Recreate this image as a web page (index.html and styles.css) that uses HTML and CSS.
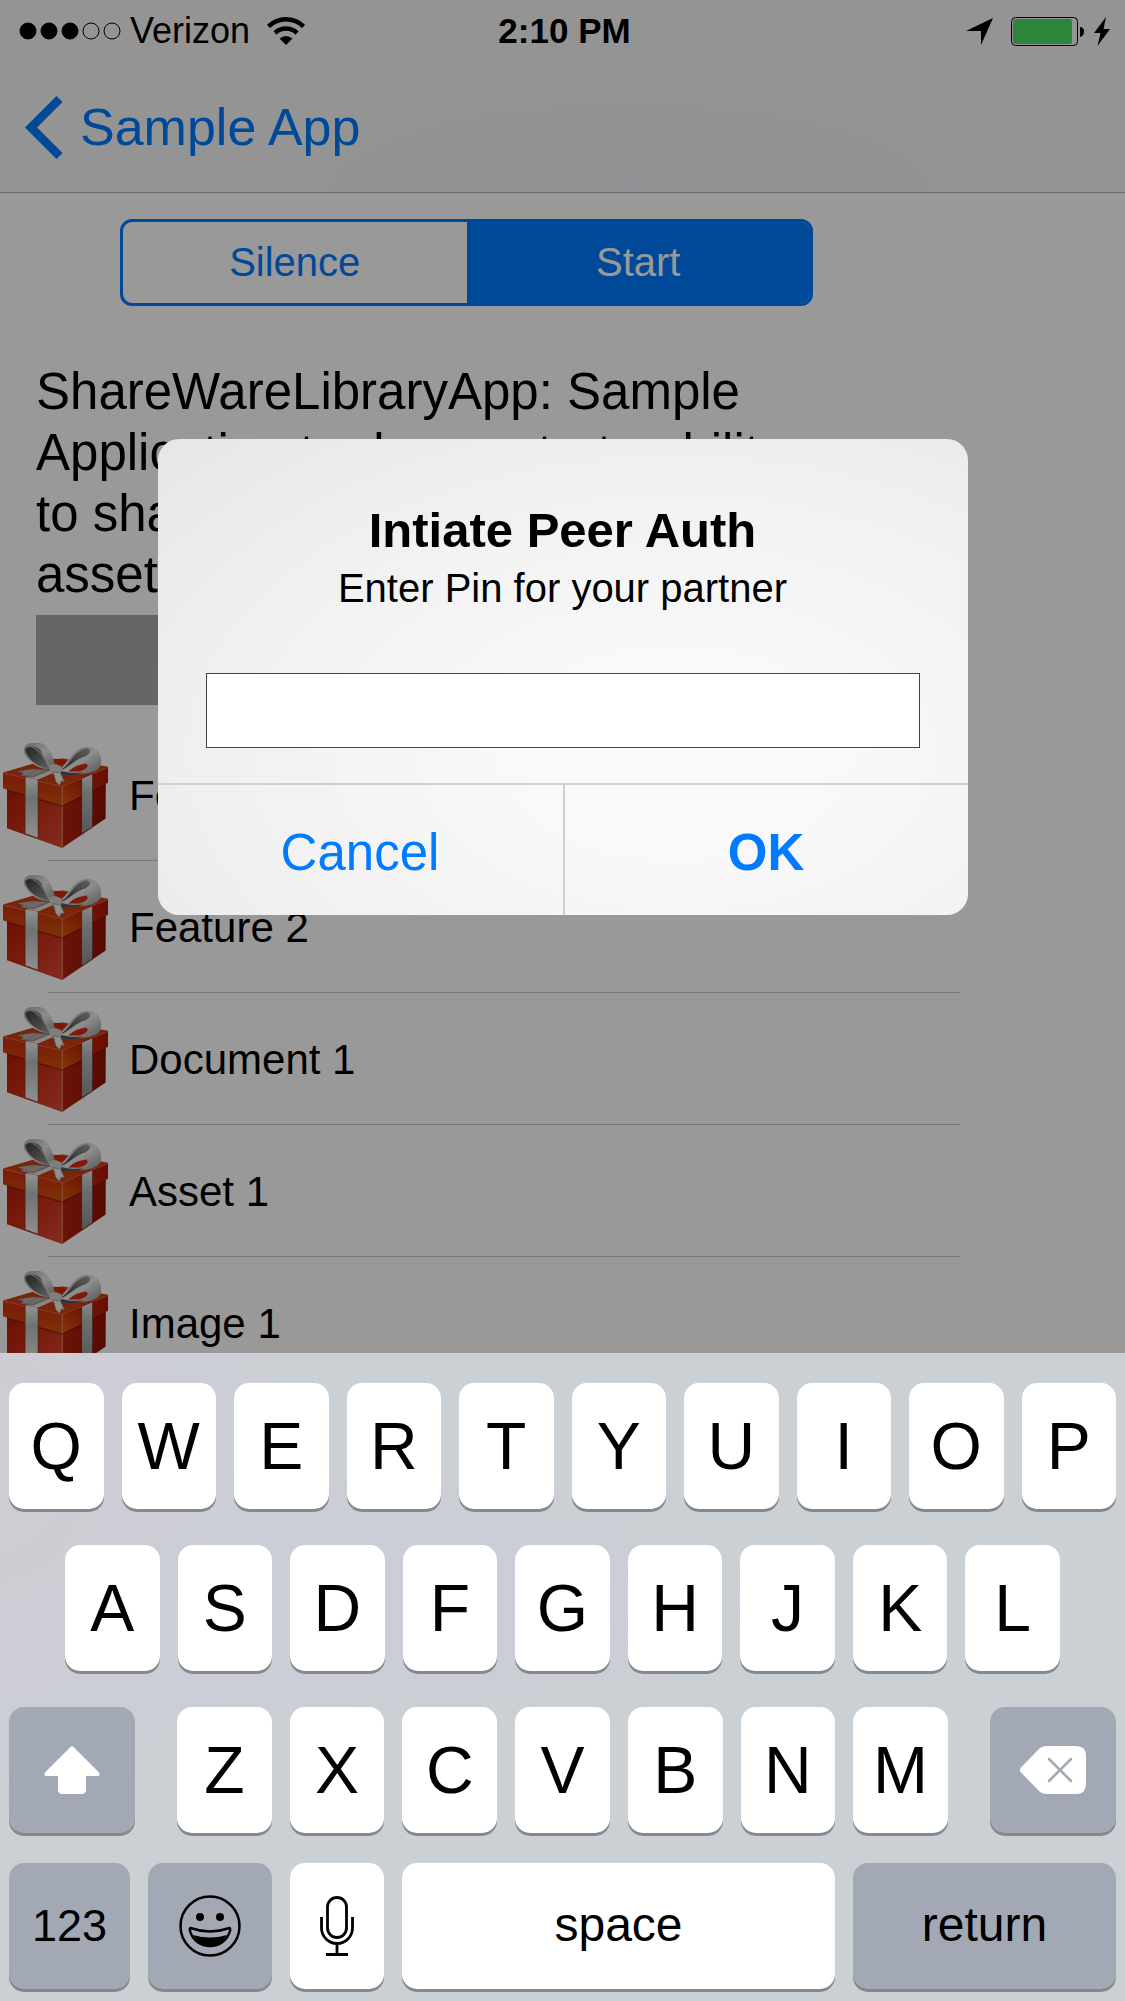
FILE: index.html
```html
<!DOCTYPE html>
<html lang="en">
<head>
<meta charset="utf-8">
<meta name="viewport" content="width=device-width, initial-scale=1">
<title>Sample App</title>
<link rel="stylesheet" href="styles.css">
</head>
<body>
<svg class="defs" aria-hidden="true">
  <defs>
    <linearGradient id="side-left" x1="0" y1="0" x2="1" y2="1"><stop offset="0" stop-color="#b41804"/><stop offset=".5" stop-color="#cc3018"/><stop offset="1" stop-color="#dc4a34"/></linearGradient>
    <linearGradient id="side-right" x1="0" y1="0" x2="1" y2="0"><stop offset="0" stop-color="#b42410"/><stop offset="1" stop-color="#901000"/></linearGradient>
    <linearGradient id="lid-left" x1="0" y1="0" x2="0" y2="1"><stop offset="0" stop-color="#cc2c0c"/><stop offset="1" stop-color="#d0540c"/></linearGradient>
    <linearGradient id="lid-right" x1="0" y1="1" x2="1" y2="0"><stop offset="0" stop-color="#d85c0c"/><stop offset=".5" stop-color="#bc2408"/><stop offset="1" stop-color="#a81408"/></linearGradient>
    <linearGradient id="ribbon" x1="0" y1="0" x2="0" y2="1"><stop offset="0" stop-color="#f4f4f4"/><stop offset=".35" stop-color="#bcbec0"/><stop offset="1" stop-color="#f0f0f0"/></linearGradient>
    <linearGradient id="ribbon-dark" x1="0" y1="0" x2="0" y2="1"><stop offset="0" stop-color="#e4e4e4"/><stop offset=".3" stop-color="#b8babc"/><stop offset="1" stop-color="#8c9092"/></linearGradient>
    <linearGradient id="loop" x1="0" y1="0" x2="1" y2="1"><stop offset="0" stop-color="#a8a8a8"/><stop offset=".5" stop-color="#ececec"/><stop offset="1" stop-color="#909090"/></linearGradient>
    <linearGradient id="hollow" x1="0" y1="0" x2="1" y2="1"><stop offset="0" stop-color="#3c3c3c"/><stop offset="1" stop-color="#989898"/></linearGradient>
    <linearGradient id="hollow-right" x1="0" y1="1" x2="1" y2="0"><stop offset="0" stop-color="#3c3c3c"/><stop offset="1" stop-color="#a0a0a0"/></linearGradient>
    <symbol id="gift" viewBox="10 42 314 314">
      <path d="M22 172 187 222V356L22 297Z" fill="url(#side-left)"/>
      <path d="M187 222 317 158V268L187 356Z" fill="url(#side-right)"/>
      <path d="M10 130 140 92 190 88 324 113 187 172Z" fill="#cc3c10"/>
      <path d="M10 130 187 170V229L22 181 10 177Z" fill="url(#lid-left)"/>
      <path d="M187 170 324 113V161L187 229Z" fill="url(#lid-right)"/>
      <path d="M22 183 187 231 317 167" fill="none" stroke="#6c1404" stroke-width="4" opacity=".6"/>
      <path d="M187 172V352" stroke="#e87c64" stroke-width="4" opacity=".8"/>
      <path d="M12 133 187 172 322 116" fill="none" stroke="#e88050" stroke-width="3" opacity=".6"/>
      <path d="M76 144 115 150V327L76 313Z" fill="url(#ribbon)" stroke="#6e3028" stroke-width="2"/>
      <path d="M245 148 278 134V293L245 314Z" fill="url(#ribbon-dark)" stroke="#6e1c14" stroke-width="2"/>
      <path d="M160 88 210 98 200 108 172 104Z" fill="#d82408"/>
      <path d="M76 144 150 122 160 132 115 151Z" fill="#e0e0e0"/>
      <path d="M50 126 98 119 152 122 102 142 58 140 70 133Z" fill="#b2aeac" stroke="#944834" stroke-width="2"/>
      <path d="M154 122C112 122 76 92 72 66 70 40 104 38 128 44 148 50 160 84 166 112Z" fill="url(#loop)"/>
      <path d="M148 117C104 114 78 82 77 61 88 46 118 52 126 70 132 88 140 104 148 117Z" fill="url(#hollow)"/>
      <path d="M94 52Q124 62 148 112" fill="none" stroke="#c8c8c8" stroke-width="5" opacity=".6"/>
      <path d="M178 122C206 98 220 62 252 55 288 48 308 74 303 100 306 122 274 135 240 134 220 138 196 138 178 134Z" fill="url(#loop)"/>
      <path d="M182 123C212 106 220 68 258 58 278 60 272 74 256 82 226 88 208 116 182 123Z" fill="url(#hollow-right)"/>
      <path d="M205 127Q226 106 260 103 272 116 238 127Z" fill="#d02c14"/>
      <path d="M184 126Q224 136 252 128L230 138H182Z" fill="#585858"/>
      <path d="M146 110Q164 98 184 112L182 134 154 134Z" fill="#d2d2d2"/>
      <path d="M160 128 182 132 194 158 184 156 180 168 168 158Z" fill="#eee" stroke="#888" stroke-width="2"/>
    </symbol>
  </defs>
</svg>

<div class="screen">
  <main class="app">
    <header class="top">
      <div class="status">
        <div class="carrier">
          <svg class="signal" viewBox="0 0 102 18" aria-label="Signal"><g stroke="#000"><circle cx="9" cy="9" r="8"/><circle cx="30" cy="9" r="8"/><circle cx="51" cy="9" r="8"/><circle cx="72" cy="9" r="8" fill="none"/><circle cx="93" cy="9" r="8" fill="none"/></g></svg>
          <span>Verizon</span>
          <svg class="wifi" viewBox="0 0 38 28" aria-label="Wi-Fi"><path d="M1.500 9.500A25 25 0 0 1 36.500 9.500M8 16A16 16 0 0 1 30 16" fill="none" stroke="#000" stroke-width="4.500"/><path d="M19 28 12.500 21.500Q19 16.500 25.500 21.500Z"/></svg>
        </div>
        <time>2:10 PM</time>
        <div class="power">
          <svg class="location" viewBox="0 0 27 27" aria-label="Location"><path d="M27 0 15 27V13H0Z"/></svg>
          <svg class="battery" viewBox="0 0 74 29" aria-label="Battery"><rect x=".5" y=".5" width="66" height="28" rx="4" fill="none" stroke="#000"/><rect x="2" y="2" width="59" height="25" rx="2" fill="#4edc64"/><path d="M69 10Q73 10 73 14.500T69 20Z"/></svg>
          <svg class="bolt" viewBox="0 0 16 29" aria-label="Charging"><path d="M12 0 0 16H6.500L3.500 29 16 12H9.500Z"/></svg>
        </div>
      </div>
      <nav class="nav">
        <a class="back" href="#">
          <svg viewBox="0 0 38 63" aria-hidden="true"><path d="M34.500 3 6 31.500 34.500 60" fill="none" stroke="#007bff" stroke-width="8.500"/></svg>
          <span>Sample App</span>
        </a>
      </nav>
    </header>

    <div class="segments">
      <button type="button" aria-pressed="false">Silence</button>
      <button type="button" aria-pressed="true">Start</button>
    </div>

    <p class="intro">ShareWareLibraryApp: Sample<br>Application to demonstrate ability<br>to share<br>assets</p>
    <div class="strip"></div>

    <ul class="items">
      <li><svg viewBox="0 0 105 105" aria-hidden="true"><use href="#gift"/></svg><span>Feature 1</span></li>
      <li><svg viewBox="0 0 105 105" aria-hidden="true"><use href="#gift"/></svg><span>Feature 2</span></li>
      <li><svg viewBox="0 0 105 105" aria-hidden="true"><use href="#gift"/></svg><span>Document 1</span></li>
      <li><svg viewBox="0 0 105 105" aria-hidden="true"><use href="#gift"/></svg><span>Asset 1</span></li>
      <li><svg viewBox="0 0 105 105" aria-hidden="true"><use href="#gift"/></svg><span>Image 1</span></li>
    </ul>

    <div class="overlay">
      <form class="dialog" role="dialog" aria-labelledby="dialog-title">
        <div class="dialog-body">
          <h1 id="dialog-title">Intiate Peer Auth</h1>
          <label for="pin">Enter Pin for your partner</label>
          <input id="pin" type="text">
        </div>
        <div class="dialog-actions">
          <button type="button">Cancel</button>
          <button type="button" class="primary">OK</button>
        </div>
      </form>
    </div>
  </main>

  <section class="keyboard" aria-label="Keyboard">
    <div class="keys">
      <button type="button">Q</button><button type="button">W</button><button type="button">E</button><button type="button">R</button><button type="button">T</button><button type="button">Y</button><button type="button">U</button><button type="button">I</button><button type="button">O</button><button type="button">P</button>
    </div>
    <div class="keys home">
      <button type="button">A</button><button type="button">S</button><button type="button">D</button><button type="button">F</button><button type="button">G</button><button type="button">H</button><button type="button">J</button><button type="button">K</button><button type="button">L</button>
    </div>
    <div class="keys lower">
      <button type="button" class="dark" aria-label="Shift"><svg width="56" height="48" viewBox="0 0 56 48"><path d="M26.500 1Q28 -.5 29.500 1L55 26.500Q57 30 53.500 30H42V44Q42 48 38 48H18Q14 48 14 44V30H2.500Q-1 30 1 26.500Z" fill="#fff"/></svg></button>
      <div class="letters">
        <button type="button">Z</button><button type="button">X</button><button type="button">C</button><button type="button">V</button><button type="button">B</button><button type="button">N</button><button type="button">M</button>
      </div>
      <button type="button" class="dark" aria-label="Delete"><svg width="66" height="48" viewBox="0 0 66 48"><path d="M1 26.500Q-1 24 1 21.500L19 3Q22 0 27 0H56Q66 0 66 10V38Q66 48 56 48H27Q22 48 19 45Z" fill="#fff"/><path d="M29 13 51 35M51 13 29 35" stroke="#a2a9b5" stroke-width="2.500" stroke-linecap="round"/></svg></button>
    </div>
    <div class="keys bottom">
      <button type="button" class="dark digits">123</button>
      <button type="button" class="dark" aria-label="Emoji"><svg width="62" height="62" viewBox="0 0 62 62"><circle cx="31" cy="31" r="29.500" fill="none" stroke="#000" stroke-width="2.500"/><circle cx="21" cy="22" r="4"/><circle cx="41" cy="22" r="4"/><path d="M11.500 33Q31 40 50.500 33 51.500 33 51 36C48 46 40 51 31 51S14 46 11 36Q10.500 33 11.500 33Z" fill="none" stroke="#000" stroke-width="2.500"/><path d="M14 40Q31 45 48 40 42 51 31 51 20 51 14 40Z"/></svg></button>
      <button type="button" aria-label="Dictation"><svg width="34" height="60" viewBox="0 0 34 60" fill="none" stroke="#000" stroke-width="2.800"><rect x="7.500" y="1.500" width="19" height="40" rx="9.500"/><path d="M1.500 21V32A15.500 15.500 0 0 0 32.500 32V21M17 47.500V58M6 58.500H28"/></svg></button>
      <button type="button" class="word">space</button>
      <button type="button" class="dark word">return</button>
    </div>
  </section>
</div>
</body>
</html>
```
FILE: styles.css
```css
* {
  box-sizing: border-box;
}

body {
  margin: 0;
  font-family: "Liberation Sans", Arial, sans-serif;
  color: #000;
}

button {
  margin: 0;
  padding: 0;
  border: 0;
  background: none;
  color: inherit;
  font: inherit;
}

svg {
  display: block;
  flex: none;
}

.defs {
  position: absolute;
  width: 0;
  height: 0;
}

.screen {
  display: flex;
  flex-direction: column;
  height: 100vh;
}

/* App content behind the alert */
.app {
  position: relative;
  flex: 1;
  min-height: 0;
  overflow: hidden;
  background: #fff;
}

.top {
  background: radial-gradient(ellipse 340px 100px at 56% 100%, #f0f3f8, #f4f4f6 60%, #f7f7f7);
  border-bottom: 1px solid #b2b2b2;
}

.status {
  display: grid;
  grid-template-columns: 1fr auto 1fr;
  align-items: center;
  height: 62px;
  padding: 0 15px 0 19px;
  font-size: 36px;
}

.status time {
  font-weight: bold;
  font-size: 35px;
}

.carrier,
.power {
  display: flex;
  align-items: center;
}

.carrier {
  gap: 9px;
}

.signal {
  width: 102px;
}

.wifi {
  width: 38px;
  margin-left: 8px;
}

.power {
  justify-content: flex-end;
  gap: 9px;
}

.location {
  width: 27px;
  margin-right: 9px;
}

.battery {
  width: 74px;
}

.bolt {
  width: 16px;
}

.nav {
  display: flex;
  align-items: center;
  height: 130px;
  padding: 0 25px;
}

.back {
  display: flex;
  align-items: center;
  gap: 17px;
  color: #007bff;
  font-size: 52px;
  text-decoration: none;
}

.back svg {
  width: 38px;
}

.segments {
  display: grid;
  grid-template-columns: 1fr 1fr;
  height: 87px;
  margin: 26px 312px 0 120px;
  border: 3px solid #007bff;
  border-radius: 12px;
  overflow: hidden;
  color: #007bff;
  font-size: 40px;
}

.segments [aria-pressed="true"] {
  background: #007bff;
  color: #fff;
}

.intro {
  margin: 55px 165px 10px 36px;
  font-size: 51px;
  line-height: 61px;
}

.strip {
  height: 90px;
  margin: 0 165px 24px 36px;
  background: #aaa;
}

.items {
  margin: 0 165px 0 0;
  padding: 0;
  list-style: none;
}

.items li {
  display: flex;
  align-items: center;
  gap: 21px;
  height: 132px;
  padding: 1px 0 0 3px;
  background: linear-gradient(#c8c7cc, #c8c7cc) 48px 100% / calc(100% - 48px) 1px no-repeat;
  font-size: 42px;
}

.items svg {
  width: 105px;
}

/* Alert */
.overlay {
  position: absolute;
  inset: 0;
  display: grid;
  place-items: center;
  background: rgba(0, 0, 0, 0.4);
}

.dialog {
  width: 72%;
  border-radius: 21px;
  overflow: hidden;
  background: radial-gradient(ellipse at 64% 66%, #f9f9f9 20%, #f1f1f1 60%, #e6e6e6);
}

.dialog-body {
  display: flex;
  flex-direction: column;
  padding: 61px 48px 35px;
  text-align: center;
}

.dialog h1 {
  margin: 0 0 4px;
  font-size: 49px;
  line-height: 60px;
}

.dialog label {
  font-size: 40px;
  line-height: 48px;
}

.dialog input {
  height: 75px;
  margin-top: 61px;
  padding: 0 12px;
  border: 1px solid #444;
  border-radius: 0;
  background: #fff;
  font: inherit;
  font-size: 40px;
}

.dialog-actions {
  display: grid;
  grid-template-columns: 1fr 1fr;
  border-top: 2px solid #cfcfd5;
}

.dialog-actions button {
  height: 130px;
  padding-top: 6px;
  color: #007bff;
  font-size: 51px;
}

.dialog-actions .primary {
  border-left: 2px solid #cfcfd5;
  font-weight: bold;
}

/* Keyboard */
.keyboard {
  display: flex;
  flex-direction: column;
  gap: 36px;
  padding: 30px 9px 12px;
  background:
    radial-gradient(ellipse 280px 360px at 0 18%, #d0ccd1, #cbcdd7 75%, transparent),
    radial-gradient(ellipse 680px 130px at 12% 38%, #cbcdd7 70%, transparent),
    #cbd0d4;
}

.keys,
.letters {
  display: grid;
  grid-template-columns: repeat(10, 1fr);
  gap: 18px;
}

.home {
  grid-template-columns: repeat(9, 1fr);
  padding: 0 56px;
}

.lower {
  grid-template-columns: 126fr 770fr 126fr;
  gap: 42px;
}

.letters {
  grid-template-columns: repeat(7, 1fr);
}

.bottom {
  grid-template-columns: 121fr 124fr 94fr 433fr 263fr;
  margin-top: -6px;
}

.keys button {
  display: flex;
  align-items: center;
  justify-content: center;
  height: 126px;
  border-radius: 15px;
  background: #fff;
  box-shadow: 0 3px 0 #85888c;
  font-size: 66px;
}

.keys .dark {
  background: #a2a9b5;
}

.keys .digits {
  font-size: 45px;
}

.keys .word {
  padding-bottom: 4px;
  font-size: 48px;
}
```
